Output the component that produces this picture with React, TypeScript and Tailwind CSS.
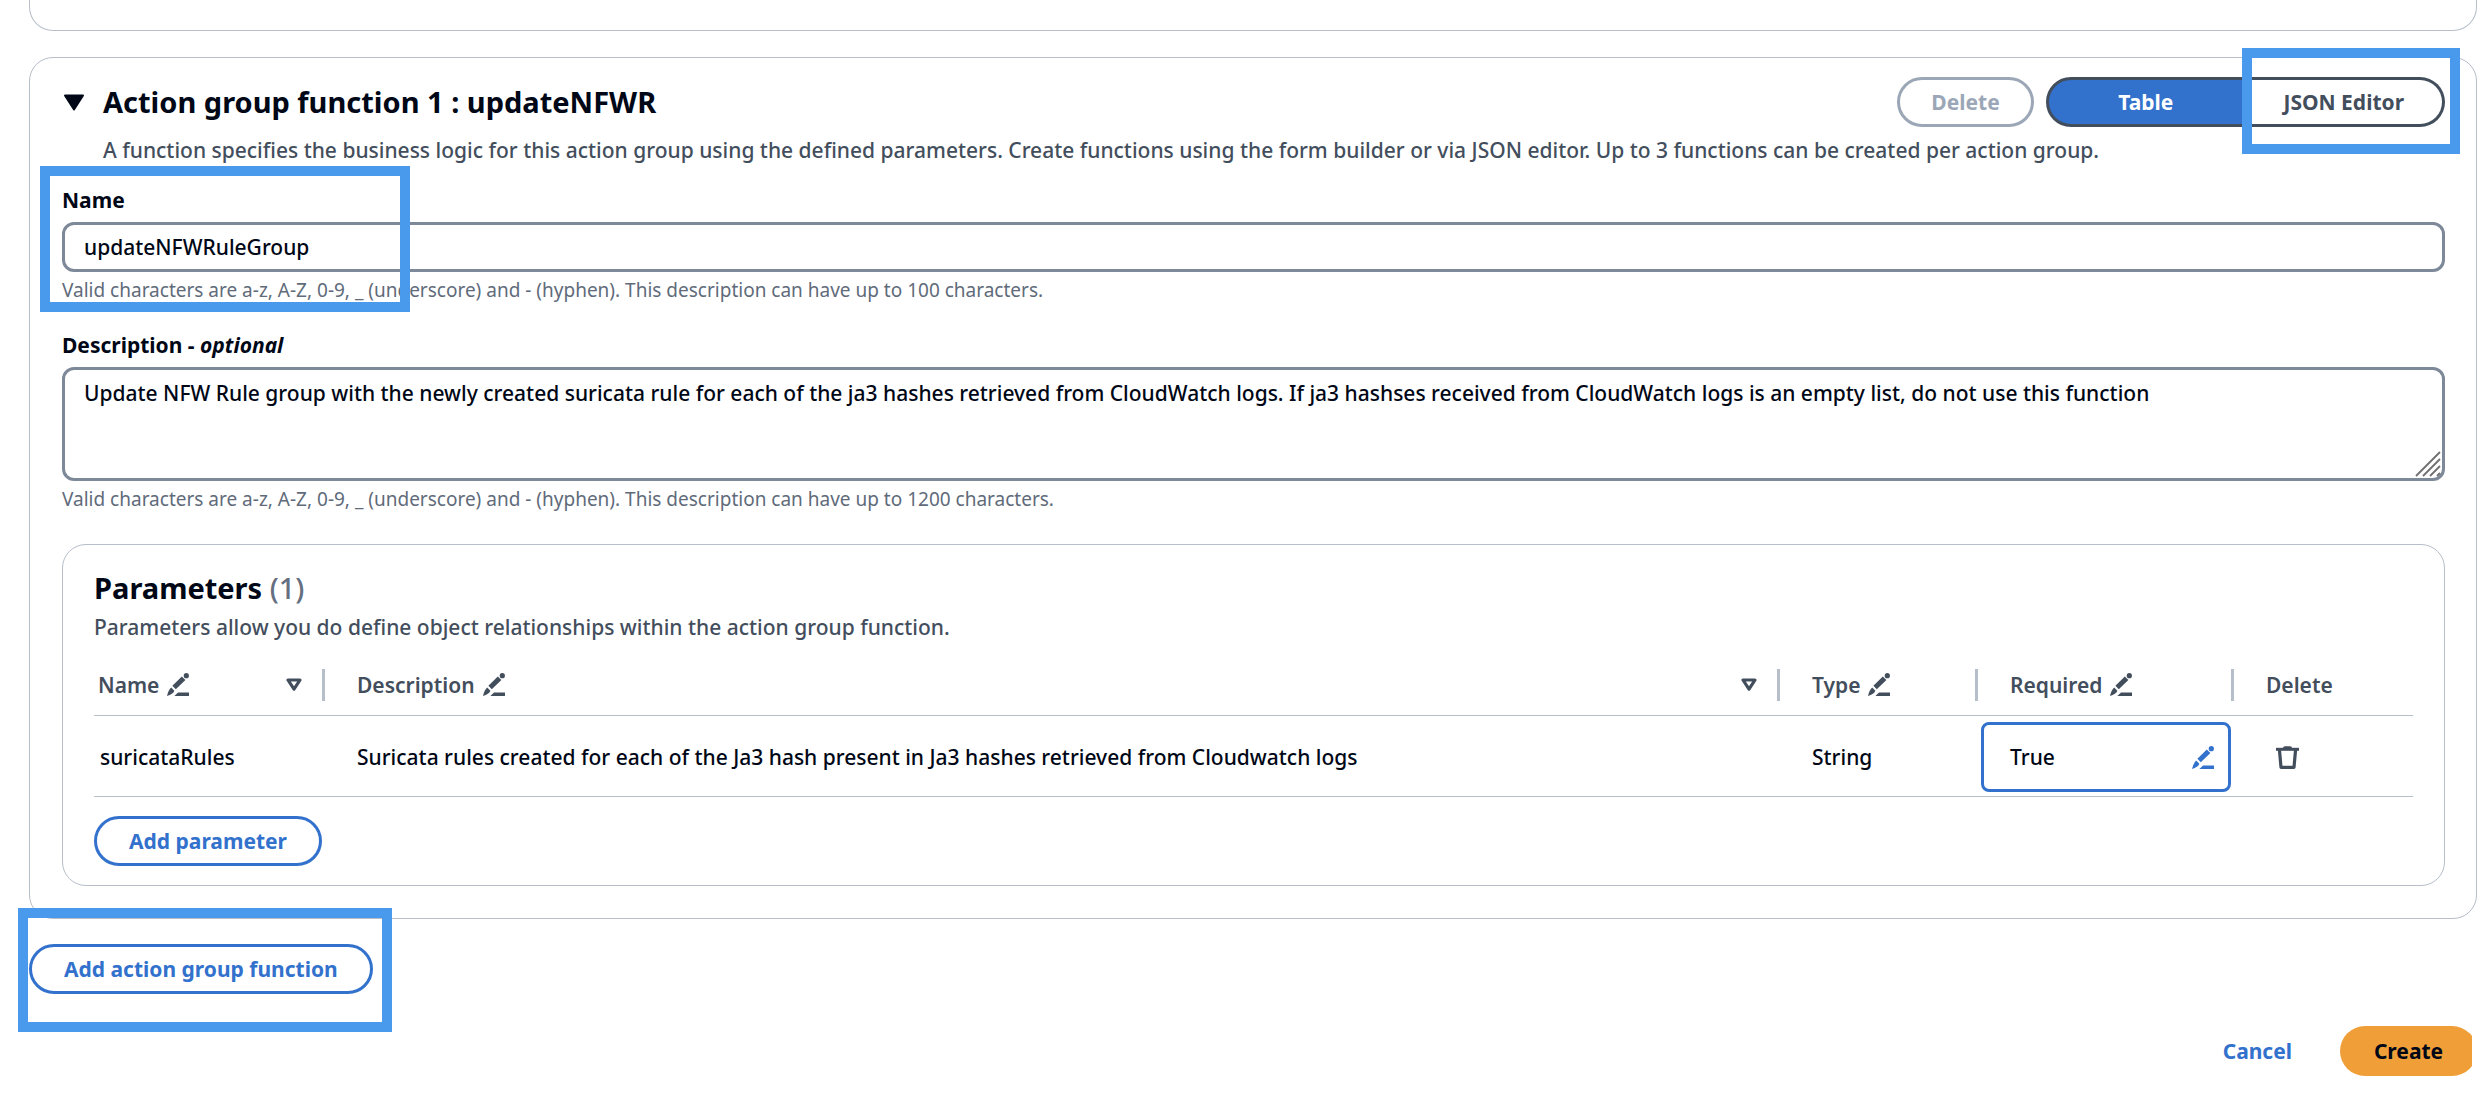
import type { ReactNode } from 'react';

function PencilIcon() {
  return (
    <svg width="22" height="23" viewBox="0 0 22 23" fill="currentColor" className="shrink-0" aria-hidden="true">
      <circle cx="19.3" cy="2.7" r="2.6" />
      <path d="M14.8 3.400 18.400 7 8.800 16.200 5.400 12.800Z" />
      <path d="M4.200 14.600 7.400 17.800Q6 21.400 0 23 1.400 17 4.200 14.600Z" />
      <path d="M11 19.400H22V23H7.400Z" />
    </svg>
  );
}

function SortIcon() {
  return (
    <svg width="16" height="14" viewBox="0 0 16 14" className="shrink-0" aria-hidden="true">
      <path d="M2 2H14L8 11.2Z" fill="none" stroke="currentColor" strokeWidth="3.200" strokeLinejoin="round" />
    </svg>
  );
}

function TrashIcon() {
  return (
    <svg width="23" height="23" viewBox="0 0 23 23" fill="none" stroke="currentColor" aria-hidden="true">
      <path d="M7 2Q7 .2 9 .2H14Q16 .2 16 2Z" fill="currentColor" stroke="none" />
      <path d="M0 3.300H23" strokeWidth="3" />
      <path d="M3.400 3.500 5 21.300H18L19.600 3.500" strokeWidth="3.200" strokeLinejoin="round" />
    </svg>
  );
}

function Highlight({ className }: { className: string }) {
  return <div aria-hidden="true" className={`pointer-events-none absolute z-10 border-[10px] border-[#4999ed] ${className}`} />;
}

function PillButton({ children }: { children: ReactNode }) {
  return (
    <button type="button" className="h-[50px] rounded-full border-3 border-[#3271cc] px-8 font-bold text-[#3271cc]">
      {children}
    </button>
  );
}

function HeaderCell({ label, sortable, divider = true, editable = true }: { label: string; sortable?: boolean; divider?: boolean; editable?: boolean }) {
  return (
    <div className="flex h-8 items-center">
      {label}
      {editable && (
        <span className="ml-2">
          <PencilIcon />
        </span>
      )}
      <span className="ml-auto flex items-center gap-5">
        {sortable && (
          <button type="button" aria-label={`Sort by ${label}`}>
            <SortIcon />
          </button>
        )}
        {divider && <span className="h-8 w-[3px] bg-[#b6bec9]" />}
      </span>
    </div>
  );
}

function ParametersCard() {
  return (
    <section className="mt-8 rounded-3xl border border-[#b6bec9] px-[31px] pt-[25px] pb-[19px]">
      <h3 className="text-[29px] leading-9 font-bold">
        Parameters <span className="font-medium text-[#656f80]">(1)</span>
      </h3>
      <p className="mt-[5px] text-[#434e5d]">Parameters allow you do define object relationships within the action group function.</p>
      <table className="mt-[11px] w-full table-fixed border-separate border-spacing-0 text-left">
        <colgroup>
          <col className="w-[231px]" />
          <col />
          <col className="w-[198px]" />
          <col className="w-[256px]" />
          <col className="w-[179px]" />
        </colgroup>
        <thead className="text-[#434e5d]">
          <tr className="h-[62px]">
            <th scope="col" className="border-b border-[#b6bec9] pl-1 font-semibold">
              <HeaderCell label="Name" sortable />
            </th>
            <th scope="col" className="border-b border-[#b6bec9] pl-8 font-semibold">
              <HeaderCell label="Description" sortable />
            </th>
            <th scope="col" className="border-b border-[#b6bec9] pl-8 font-semibold">
              <HeaderCell label="Type" />
            </th>
            <th scope="col" className="border-b border-[#b6bec9] pl-8 font-semibold">
              <HeaderCell label="Required" />
            </th>
            <th scope="col" className="border-b border-[#b6bec9] pl-8 font-semibold">
              <HeaderCell label="Delete" divider={false} editable={false} />
            </th>
          </tr>
        </thead>
        <tbody>
          <tr className="h-[81px]">
            <td className="border-b border-[#b6bec9] pt-0.5 pl-1.5">suricataRules</td>
            <td className="border-b border-[#b6bec9] pt-0.5 pl-8">
              Suricata rules created for each of the Ja3 hash present in Ja3 hashes retrieved from Cloudwatch logs
            </td>
            <td className="border-b border-[#b6bec9] pt-0.5 pl-8">String</td>
            <td className="border-b border-[#b6bec9] px-[3px] pt-0.5">
              <button
                type="button"
                aria-label="Edit required, True"
                className="flex h-[70px] w-full items-center justify-between rounded-lg border-3 border-[#3271cc] pr-3.5 pl-[26px] text-[#3271cc]"
              >
                <span className="text-[#000716]">True</span>
                <PencilIcon />
              </button>
            </td>
            <td className="border-b border-[#b6bec9] pt-0.5 pl-[42px] text-[#434e5d]">
              <button type="button" aria-label="Delete parameter" className="block">
                <TrashIcon />
              </button>
            </td>
          </tr>
        </tbody>
      </table>
      <div className="mt-[19px] flex">
        <PillButton>Add parameter</PillButton>
      </div>
    </section>
  );
}

export default function App() {
  return (
    <main className="overflow-hidden bg-white pr-[5px] pl-[29px] font-['Noto_Sans','Open_Sans',sans-serif] text-[21px] leading-8 font-medium text-[#000716]">
      <div className="h-[31px] rounded-b-3xl border border-t-0 border-[#b6bec9]" />

      <section className="mt-[26px] rounded-3xl border border-[#b6bec9] pt-[19px] pr-[31px] pb-8 pl-8">
        <div className="flex items-center justify-between">
          <h2 className="flex items-center text-[29px] leading-9 font-bold">
            <button type="button" aria-label="Collapse function" className="w-[41px] pl-px">
              <svg width="22" height="17" viewBox="0 0 22 17" aria-hidden="true">
                <path d="M2 1.500H20L11 15.500Z" fill="currentColor" stroke="currentColor" strokeWidth="2" strokeLinejoin="round" />
              </svg>
            </button>
            Action group function 1 : updateNFWR
          </h2>
          <div className="flex gap-3 font-bold">
            <button type="button" disabled className="h-[50px] w-[137px] rounded-full border-3 border-[#9ba7b6] text-[#9ba7b6]">
              Delete
            </button>
            <div className="relative grid w-[399px] grid-cols-2" role="group" aria-label="Editor view">
              <button type="button" aria-pressed="true" className="h-[50px] rounded-l-full border-3 border-[#434e5d] bg-[#3271cc] text-white">
                Table
              </button>
              <button type="button" aria-pressed="false" className="h-[50px] rounded-r-full border-3 border-l-0 border-[#434e5d] text-[#434e5d]">
                JSON Editor
              </button>
              <Highlight className="-top-[29px] -right-[15px] h-[106px] w-[218px]" />
            </div>
          </div>
        </div>
        <p className="mt-[7px] pl-[41px] text-[#434e5d]">
          A function specifies the business logic for this action group using the defined parameters. Create functions using the form
          builder or via JSON editor. Up to 3 functions can be created per action group.
        </p>

        <div className="relative mt-[18px]">
          <label htmlFor="fn-name" className="block font-bold">
            Name
          </label>
          <input
            id="fn-name"
            type="text"
            defaultValue="updateNFWRuleGroup"
            aria-describedby="fn-name-hint"
            className="mt-1.5 block h-[50px] w-full rounded-xl border-3 border-[#7d8998] px-[19px]"
          />
          <p id="fn-name-hint" className="mt-[5px] text-[19px] leading-[26px] font-normal text-[#5f6b7a]">
            Valid characters are a-z, A-Z, 0-9, _ (underscore) and - (hyphen). This description can have up to 100 characters.
          </p>
          <Highlight className="-top-[18px] -left-[22px] h-[146px] w-[370px]" />
        </div>

        <div className="mt-[26px]">
          <label htmlFor="fn-description" className="block font-bold">
            Description - <em>optional</em>
          </label>
          <div className="relative mt-1.5">
            <textarea
              id="fn-description"
              aria-describedby="fn-description-hint"
              className="block h-[114px] w-full resize-none rounded-xl border-3 border-[#7d8998] px-[19px] pt-[7px]"
              defaultValue="Update NFW Rule group with the newly created suricata rule for each of the ja3 hashes retrieved from CloudWatch logs. If ja3 hashses received from CloudWatch logs is an empty list, do not use this function"
            />
            <svg width="26" height="26" viewBox="0 0 26 26" className="absolute right-1 bottom-1" fill="none" stroke="#6f6f6f" strokeWidth="1.800" aria-hidden="true">
              <path d="M1 25 25 1M8 25 25 8M15 25 25 15M22 25 25 22" />
            </svg>
          </div>
          <p id="fn-description-hint" className="mt-[5px] text-[19px] leading-[26px] font-normal text-[#5f6b7a]">
            Valid characters are a-z, A-Z, 0-9, _ (underscore) and - (hyphen). This description can have up to 1200 characters.
          </p>
        </div>

        <ParametersCard />
      </section>

      <div className="mt-[25px] flex">
        <div className="relative">
          <PillButton>Add action group function</PillButton>
          <Highlight className="-top-9 -left-[11px] h-[124px] w-[374px]" />
        </div>
      </div>

      <div className="mt-8 mr-[5px] flex justify-end gap-12 overflow-hidden font-bold">
        <button type="button" className="text-[#3271cc]">
          Cancel
        </button>
        <button type="button" className="-mr-[5px] h-[50px] w-[137px] rounded-full bg-[#f09e38]">
          Create
        </button>
      </div>
    </main>
  );
}
